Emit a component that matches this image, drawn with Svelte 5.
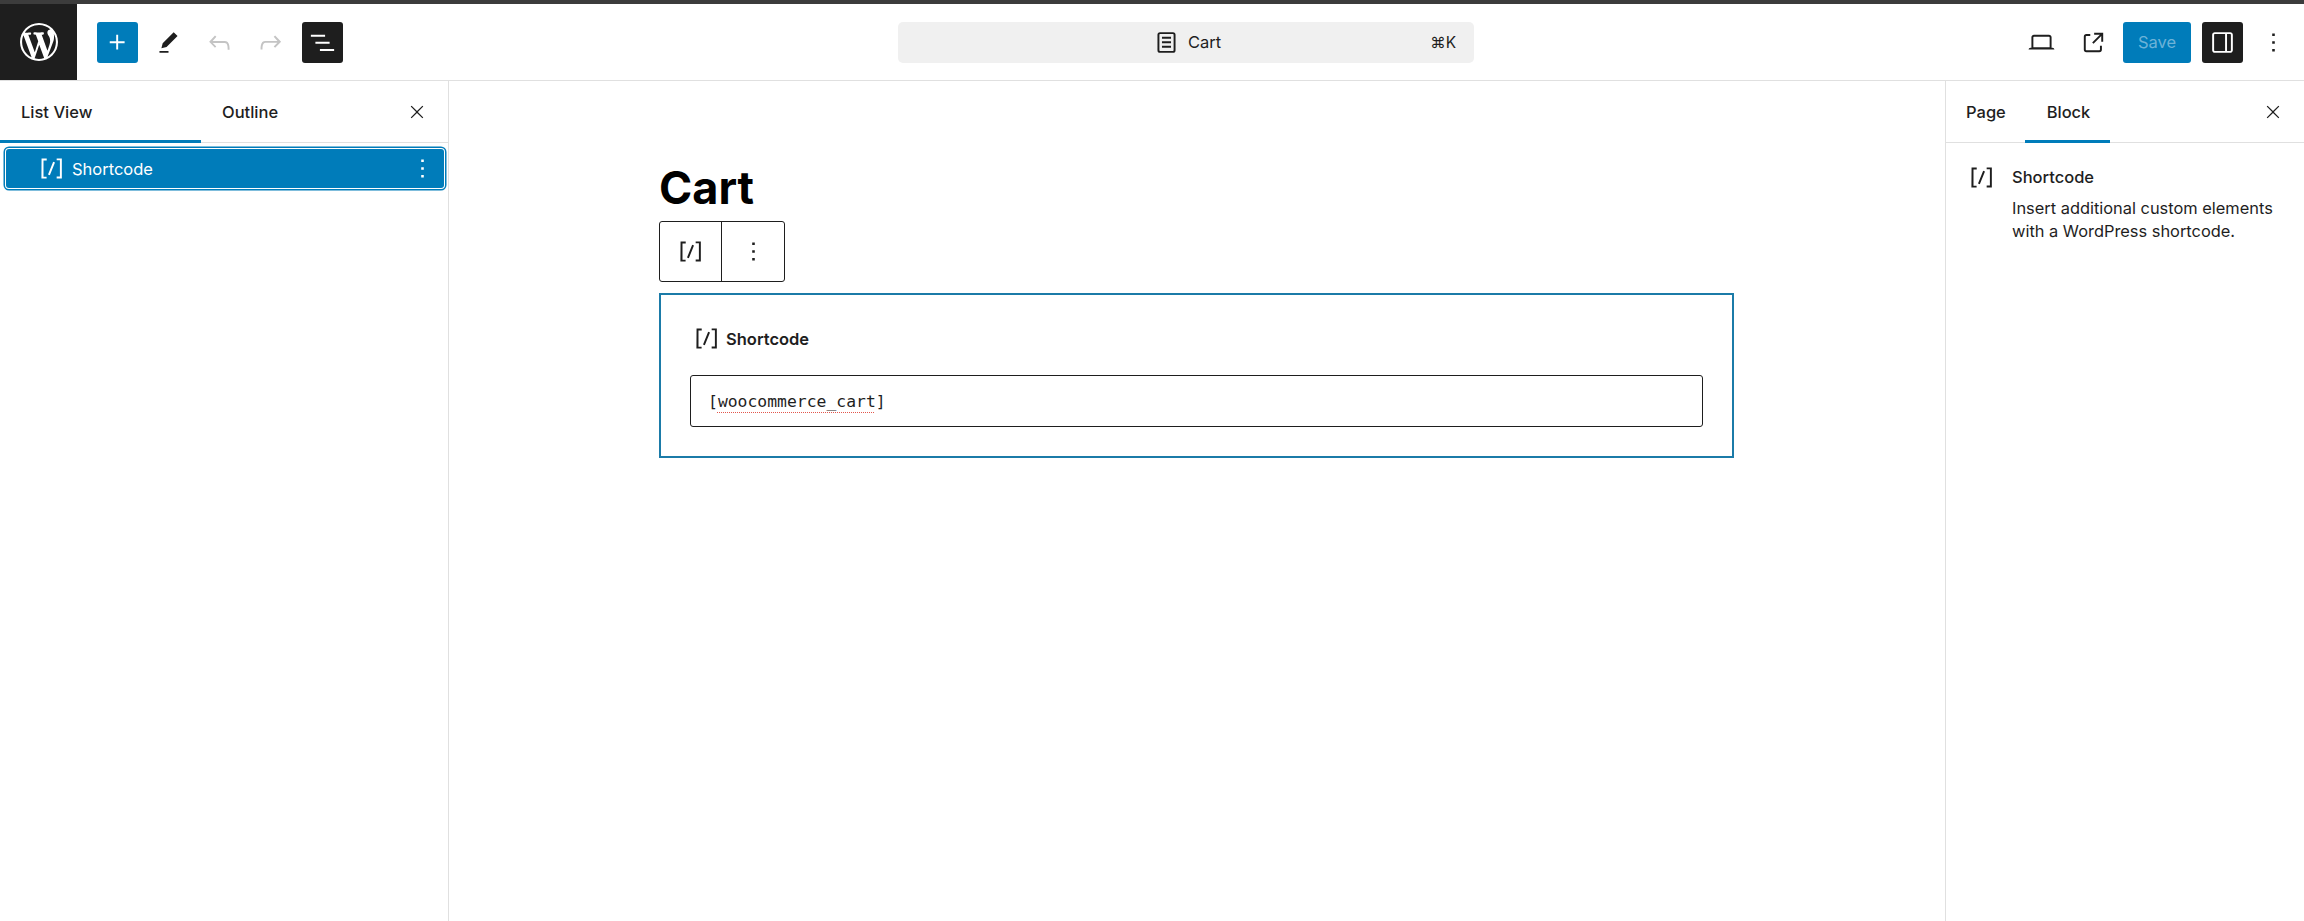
<script lang="ts">
  const icons = {
    wp: 'M20 10c0-5.51-4.49-10-10-10C4.48 0 0 4.49 0 10c0 5.52 4.48 10 10 10 5.51 0 10-4.48 10-10zM7.78 15.37L4.37 6.22c.55-.02 1.17-.08 1.17-.08.5-.06.44-1.13-.06-1.11 0 0-1.45.11-2.37.11-.18 0-.37 0-.58-.01C4.12 2.69 6.87 1.11 10 1.11c2.33 0 4.45.87 6.05 2.34-.68-.11-1.65.39-1.65 1.58 0 .74.45 1.36.9 2.1.35.61.55 1.36.55 2.46 0 1.49-1.4 5-1.4 5l-3.03-8.37c.54-.02.82-.17.82-.17.5-.05.44-1.25-.06-1.22 0 0-1.44.12-2.38.12-.87 0-2.33-.12-2.33-.12-.5-.03-.56 1.2-.06 1.22l.92.08 1.26 3.41zM17.41 10c.24-.64.74-1.87.43-4.25.7 1.29 1.05 2.71 1.05 4.25 0 3.29-1.73 6.24-4.4 7.78.97-2.59 1.94-5.2 2.92-7.78zM6.1 18.09C3.12 16.65 1.11 13.53 1.11 10c0-1.3.23-2.48.72-3.59C3.25 10.3 4.67 14.2 6.1 18.09zm4.03-6.63l2.58 6.98c-.86.29-1.76.45-2.71.45-.79 0-1.57-.11-2.29-.33.81-2.38 1.62-4.74 2.42-7.1z',
    plus: 'M11 12.5V17.5H12.5V12.5H17.5V11H12.5V6H11V11H6V12.5H11Z',
    pencil: 'm19 7-3-3-8.5 8.5-1 4 4-1L19 7Zm-7 11.5H5V20h7v-1.5Z',
    undo: 'M18.3 11.7c-.6-.6-1.4-.9-2.3-.9H6.7l2.9-3.3-1.1-1-4.5 5L8.5 16l1-1-2.7-2.7H16c.5 0 .9.2 1.3.5 1 1 1 3.4 1 4.5v.3h1.5v-.2c0-1.5 0-4.3-1.5-5.7z',
    redo: 'M15.6 6.5l-1.1 1 2.9 3.3H8c-.9 0-1.7.3-2.3.9-1.4 1.5-1.4 4.2-1.4 5.6v.2h1.5v-.3c0-1.1 0-3.5 1-4.5.3-.3.7-.5 1.3-.5h9.2L14.5 15l1.1 1.1 4.6-4.6-4.6-5z',
    list: 'M3 6h11v1.5H3V6Zm3.5 5.5h11V13h-11v-1.5ZM21 17H10v1.5h11V17Z',
    page: 'M15.5 7.5h-7V9h7V7.5Zm-7 3.5h7v1.5h-7V11Zm7 3.5h-7V16h7v-1.5ZM17 4H7a2 2 0 0 0-2 2v12a2 2 0 0 0 2 2h10a2 2 0 0 0 2-2V6a2 2 0 0 0-2-2ZM7 5.5h10a.5.5 0 0 1 .5.5v12a.5.5 0 0 1-.5.5H7a.5.5 0 0 1-.5-.5V6a.5.5 0 0 1 .5-.5Z',
    laptop: 'M20.5 16h-.7V8c0-1.1-.9-2-2-2H6.2c-1.1 0-2 .9-2 2v8h-.7c-.8 0-1.5.7-1.5 1.5h20c0-.8-.7-1.5-1.5-1.5zM5.7 8c0-.3.2-.5.5-.5h11.6c.3 0 .5.2.5.5v7.6H5.7V8z',
    external: 'M19.5 4.5h-7V6h4.44l-5.97 5.97 1.06 1.06L18 7.06v4.44h1.5v-7Zm-13 1a2 2 0 0 0-2 2v10a2 2 0 0 0 2 2h10a2 2 0 0 0 2-2v-3H17v3a.5.5 0 0 1-.5.5h-10a.5.5 0 0 1-.5-.5v-10a.5.5 0 0 1 .5-.5h3V5.5h-3Z',
    drawer: 'M18 4H6c-1.1 0-2 .9-2 2v12c0 1.1.9 2 2 2h12c1.1 0 2-.9 2-2V6c0-1.1-.9-2-2-2zm-4 14.5H6c-.3 0-.5-.2-.5-.5V6c0-.3.2-.5.5-.5h8v13zm4.5-.5c0 .3-.2.5-.5.5h-2.5v-13H18c.3 0 .5.2.5.5v12z',
    more: 'M13 19h-2v-2h2v2zm0-6h-2v-2h2v2zm0-6h-2V5h2v2z',
    close: 'm13.06 12 6.47-6.47-1.06-1.06L12 10.94 5.53 4.47 4.47 5.53 10.94 12l-6.47 6.47 1.06 1.06L12 13.06l6.47 6.47 1.06-1.06L13.06 12Z',
    shortcode: 'M16 4.2v1.5h2.5v12.5H16v1.5h4V4.2h-4zM4.2 19.8h4v-1.5H5.8V5.8h2.5V4.2h-4l-.1 15.6zm5.1-3.1l1.4.6 4-10-1.4-.6-4 10z'
  };
</script>

{#snippet icon(d: string, cls = '')}
  <svg class="icon {cls}" viewBox="0 0 24 24" aria-hidden="true"><path {d} /></svg>
{/snippet}

<div class="editor">
  <header class="topbar">
    <div class="topbar__left">
      <a class="logo" href="#top" aria-label="WordPress">
        <svg viewBox="0 0 20 20" aria-hidden="true"><path d={icons.wp} /></svg>
      </a>
      <div class="tools">
        <button class="tool tool--primary">{@render icon(icons.plus)}</button>
        <button class="tool tool--pencil">{@render icon(icons.pencil)}</button>
        <button class="tool tool--muted tool--undo">{@render icon(icons.undo)}</button>
        <button class="tool tool--muted tool--redo">{@render icon(icons.redo)}</button>
        <button class="tool tool--dark tool--list">{@render icon(icons.list)}</button>
      </div>
    </div>

    <button class="search">
      <span class="search__title">{@render icon(icons.page)}Cart</span>
      <span class="search__key">⌘K</span>
    </button>

    <div class="topbar__right">
      <button class="tool">{@render icon(icons.laptop)}</button>
      <button class="tool">{@render icon(icons.external)}</button>
      <button class="save">Save</button>
      <button class="tool tool--dark">{@render icon(icons.drawer)}</button>
      <button class="tool">{@render icon(icons.more)}</button>
    </div>
  </header>

  <div class="body">
    <aside class="listview">
      <div class="tabs">
        <button class="tab tab--list tab--active">List View</button>
        <button class="tab tab--outline">Outline</button>
        <button class="tabs__close">{@render icon(icons.close)}</button>
      </div>
      <div class="row">
        {@render icon(icons.shortcode)}
        <span class="row__label">Shortcode</span>
        {@render icon(icons.more)}
      </div>
    </aside>

    <main class="canvas">
      <div class="page">
        <h1 class="title">Cart</h1>
        <div class="block-toolbar">
          <button class="block-toolbar__btn">{@render icon(icons.shortcode)}</button>
          <button class="block-toolbar__btn">{@render icon(icons.more)}</button>
        </div>
        <div class="block">
          <div class="block__label">
            {@render icon(icons.shortcode)}
            <span>Shortcode</span>
          </div>
          <div class="block__input">[<span class="typo">woocommerce_cart</span>]</div>
        </div>
      </div>
    </main>

    <aside class="inspector">
      <div class="tabs tabs--right">
        <button class="tab tab--page">Page</button>
        <button class="tab tab--block tab--active">Block</button>
        <button class="tabs__close">{@render icon(icons.close)}</button>
      </div>
      <div class="card">
        {@render icon(icons.shortcode)}
        <div class="card__text">
          <h2>Shortcode</h2>
          <p>Insert additional custom elements with a WordPress shortcode.</p>
        </div>
      </div>
    </aside>
  </div>
</div>

<style>
  :global(body) {
    background: #fff;
    overflow: hidden;
  }

  button {
    border: 0;
    background: none;
    padding: 0;
    font: inherit;
    color: inherit;
  }

  .editor {
    display: flex;
    flex-direction: column;
    height: 921px;
    font-family: Inter, 'Liberation Sans', sans-serif;
    font-size: 16.5px;
    color: #1e1e1e;
    border-top: 4px solid #3c3c3c;
    box-sizing: border-box;
  }

  .icon {
    display: block;
    width: 31px;
    height: 31px;
    fill: currentColor;
    flex: none;
  }

  .topbar {
    display: flex;
    align-items: center;
    height: 77px;
    flex: none;
    box-sizing: border-box;
    border-bottom: 1px solid #e0e0e0;
  }

  .topbar__left {
    display: flex;
    align-items: center;
    width: 898px;
    height: 100%;
  }

  .logo {
    display: flex;
    align-items: center;
    justify-content: center;
    width: 77px;
    height: 100%;
    flex: none;
    background: #1e1e1e;
  }

  .logo svg {
    width: 38px;
    height: 38px;
    fill: #fff;
  }

  .tools {
    display: flex;
    align-items: center;
    margin-left: 20px;
  }

  .tool {
    display: flex;
    align-items: center;
    justify-content: center;
    width: 41px;
    height: 41px;
    border-radius: 3px;
    flex: none;
  }

  .tool--primary {
    background: #007cba;
    color: #fff;
  }

  .tool--dark {
    background: #1e1e1e;
    color: #fff;
  }

  .tool--muted {
    color: #c4c4c4;
  }

  .tool--pencil,
  .tool--undo,
  .tool--redo {
    margin-left: 10px;
  }

  .tool--list {
    margin-left: 11px;
  }

  .search {
    display: grid;
    grid-template-columns: 1fr auto 1fr;
    align-items: center;
    width: 576px;
    height: 41px;
    padding: 0 18px;
    box-sizing: border-box;
    border-radius: 5px;
    background: #f0f0f0;
    color: #1e1e1e;
  }

  .search__title {
    grid-column: 2;
    display: flex;
    align-items: center;
    gap: 6px;
  }

  .search__key {
    grid-column: 3;
    justify-self: end;
    font-size: 15.4px;
  }

  .topbar__right {
    display: flex;
    align-items: center;
    flex: 1;
    justify-content: flex-end;
    padding-right: 10px;
  }

  .topbar__right .tool:nth-child(2) {
    margin-left: 11px;
    margin-right: 9px;
  }

  .save {
    width: 68px;
    height: 41px;
    margin-right: 11px;
    border-radius: 3px;
    background: #007cba;
    color: #6db3d8;
  }

  .topbar__right .tool:last-child {
    margin-left: 10px;
  }

  .body {
    display: flex;
    flex: 1;
    min-height: 0;
  }

  .listview {
    width: 449px;
    flex: none;
    box-sizing: border-box;
    border-right: 1px solid #e0e0e0;
  }

  .tabs {
    display: flex;
    align-items: stretch;
    height: 62px;
    box-sizing: border-box;
    border-bottom: 1px solid #e0e0e0;
  }

  .tab {
    font-weight: 500;
    flex: none;
    margin-bottom: -1px;
    padding-top: 2px;
    border-bottom: 3px solid transparent;
  }

  .tab--active {
    border-bottom-color: #007cba;
  }

  .tab--list {
    width: 201px;
    text-align: left;
    padding-left: 21px;
  }

  .tab--outline {
    width: 98px;
    margin-left: 21px;
    text-align: left;
  }

  .tabs__close {
    display: flex;
    align-items: center;
    justify-content: center;
    width: 31px;
    margin-left: auto;
    margin-right: 16px;
  }

  .tabs__close .icon {
    width: 20px;
    height: 20px;
  }

  .row {
    display: flex;
    align-items: center;
    height: 39px;
    margin: 6px 4px 0 6px;
    padding-left: 30px;
    padding-right: 6px;
    border-radius: 3px;
    background: #007cba;
    color: #fff;
    box-shadow: 0 0 0 1px #fff, 0 0 0 2.5px #007cba;
  }

  .row__label {
    flex: 1;
    margin-left: 5px;
  }

  .canvas {
    flex: 1;
    min-width: 0;
  }

  .page {
    width: 1075px;
    margin-left: 210px;
    padding-top: 78px;
  }

  .title {
    margin: 0;
    font-size: 45px;
    line-height: 58px;
    font-weight: 700;
    color: #000;
    font-family: Inter, 'Liberation Sans', sans-serif;
  }

  .block-toolbar {
    display: inline-flex;
    vertical-align: top;
    margin-top: 4px;
    border: 1px solid #1e1e1e;
    border-radius: 3px;
    box-sizing: border-box;
    height: 61px;
  }

  .block-toolbar__btn {
    display: flex;
    align-items: center;
    justify-content: center;
    width: 62px;
  }

  .block-toolbar__btn:first-child {
    border-right: 1px solid #1e1e1e;
  }

  .block {
    margin-top: 11px;
    height: 165px;
    box-sizing: border-box;
    padding: 28px 29px 0 29px;
    border: 2px solid #1b7ba8;
  }

  .block__label {
    display: flex;
    align-items: center;
    gap: 4px;
    padding-left: 1px;
    font-weight: 600;
    font-size: 16.5px;
  }

  .block__input {
    display: flex;
    align-items: center;
    height: 52px;
    margin-top: 21px;
    padding-left: 17px;
    box-sizing: border-box;
    border: 1px solid #1e1e1e;
    border-radius: 3px;
    font-family: 'DejaVu Sans Mono', 'Liberation Mono', monospace;
    font-size: 16.4px;
    white-space: pre;
  }

  .typo {
    text-decoration: underline dotted #e2574c;
    text-decoration-skip-ink: none;
    text-underline-offset: 5px;
    text-decoration-thickness: 1px;
  }

  .inspector {
    width: 359px;
    flex: none;
    box-sizing: border-box;
    border-left: 1px solid #e0e0e0;
  }

  .tab--page {
    width: 54px;
    margin-left: 20px;
    text-align: left;
  }

  .tab--block {
    width: 85px;
    margin-left: 5px;
    padding-left: 2px;
    box-sizing: border-box;
    text-align: center;
  }

  .card {
    display: flex;
    gap: 15px;
    padding: 19px 20px 0 20px;
  }

  .card h2 {
    margin: 0;
    font-size: 16.5px;
    line-height: 30px;
    font-weight: 500;
  }

  .card p {
    margin: 5px 0 0;
    font-size: 16.4px;
    line-height: 23px;
    color: #1e1e1e;
  }
</style>
